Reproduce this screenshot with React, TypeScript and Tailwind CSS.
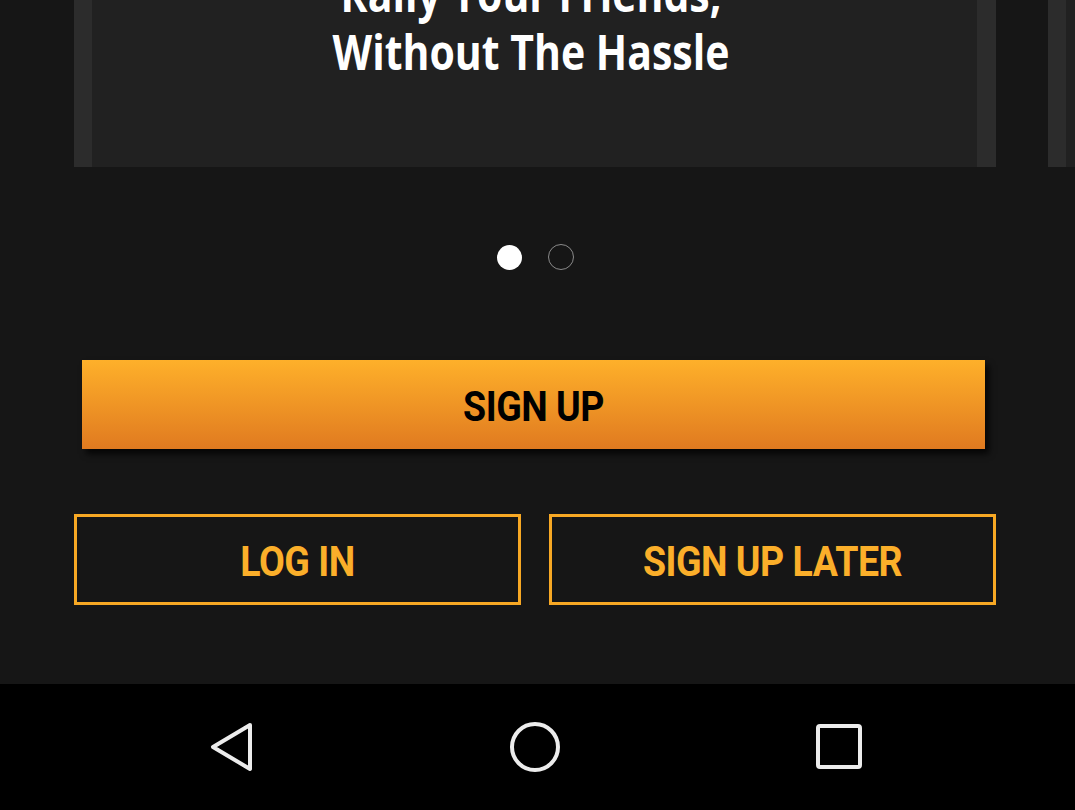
import React from 'react';

const Card = ({ children }: { children?: React.ReactNode }) => (
  <div className="flex h-full w-[922px] shrink-0 bg-[#212121]">
    <div className="w-[18px] shrink-0 bg-[#2c2c2c]"></div>
    <div className="flex-1 overflow-hidden">{children}</div>
    <div className="w-[19px] shrink-0 bg-[#2c2c2c]"></div>
  </div>
);

export default function App() {
  return (
    <div className="w-[1075px] h-[810px] bg-[#161616] flex flex-col overflow-hidden font-['Roboto',sans-serif]">
      {/* Carousel */}
      <div className="h-[167px] flex gap-[52px] pl-[74px] overflow-hidden shrink-0">
        <Card>
          <div className="-mt-[35px] -ml-[7px] flex flex-col items-center font-['Open_Sans',sans-serif] font-bold text-white text-[41px] leading-[49px] scale-y-[1.18] origin-top">
            <span>Rally Your Friends,</span>
            <span>Without The Hassle</span>
          </div>
        </Card>
        <Card />
      </div>

      {/* Page dots */}
      <div className="h-[184px] flex items-center justify-center gap-[26px] pr-[4px] shrink-0 -mt-[2px]">
        <span className="w-[25px] h-[25px] rounded-full bg-white"></span>
        <span className="w-[26px] h-[26px] rounded-full border-[1.5px] border-[#8a8a8a]"></span>
      </div>

      {/* Sign up */}
      <div className="pl-[82px] shrink-0 mt-[11px]">
        <button className="w-[903px] h-[89px] bg-gradient-to-b from-[#feb02a] to-[#e07a20] shadow-[4px_5px_6px_rgba(0,0,0,0.75)] flex items-center justify-center">
          <span className="text-black font-bold text-[37.5px] tracking-[-0.5px] scale-y-[1.12] mt-[4px]">SIGN UP</span>
        </button>
      </div>

      <div className="flex gap-[28px] pl-[74px] mt-[65px] shrink-0">
        <button className="w-[447px] h-[91px] border-[3px] border-[#f7a824] flex items-center justify-center">
          <span className="text-[#fbaf2a] font-bold text-[37.5px] tracking-[-0.5px] scale-y-[1.12] mt-[4px]">LOG IN</span>
        </button>
        <button className="w-[447px] h-[91px] border-[3px] border-[#f7a824] flex items-center justify-center">
          <span className="text-[#fbaf2a] font-bold text-[37.5px] tracking-[-0.5px] scale-y-[1.12] mt-[4px]">SIGN UP LATER</span>
        </button>
      </div>

      {/* Nav bar */}
      <div className="mt-auto h-[126px] bg-black flex items-center justify-center pr-[5px] shrink-0">
        <div className="w-[304px] flex justify-center">
          <svg width="48" height="54" viewBox="0 0 48 54" fill="none" className="ml-[2px]">
            <path d="M42 5 L5 27 L42 49 Z" stroke="#ececec" strokeWidth="4" strokeLinejoin="round" />
          </svg>
        </div>
        <div className="w-[304px] flex justify-center">
          <svg width="54" height="54" viewBox="0 0 54 54" fill="none">
            <circle cx="27" cy="27" r="23" stroke="#ececec" strokeWidth="4" />
          </svg>
        </div>
        <div className="w-[304px] flex justify-center">
          <svg width="48" height="48" viewBox="0 0 48 48" fill="none">
            <rect x="3" y="3" width="42" height="41" rx="2" stroke="#ececec" strokeWidth="4" />
          </svg>
        </div>
      </div>
    </div>
  );
}
